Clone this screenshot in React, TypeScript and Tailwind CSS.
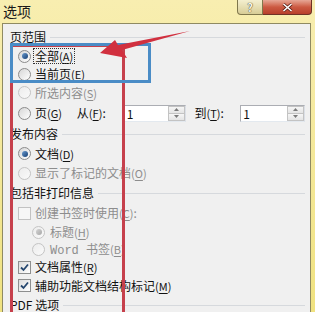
import React from 'react';

const cjk = { fontFamily: '"Noto Sans CJK SC", "Noto Sans", sans-serif' };

const Key: React.FC<{ k: string }> = ({ k }) => (
  <span className="text-[11px]">
    (<span className="underline underline-offset-2">{k}</span>)
  </span>
);

const Radio: React.FC<{ on?: boolean; off?: boolean }> = ({ on, off }) => (
  <span
    className={
      off
        ? 'w-[13px] h-[13px] shrink-0 rounded-full border border-[#c4c4c4] bg-gradient-to-br from-[#ececec] to-[#fafafa] flex items-center justify-center'
        : 'w-[13px] h-[13px] shrink-0 rounded-full border border-[#8b8b8b] bg-gradient-to-br from-[#d6d6d6] to-[#ffffff] flex items-center justify-center'
    }
  >
    {on && !off && <span className="w-[6px] h-[6px] rounded-full bg-gradient-to-br from-[#6a9bcf] to-[#163f73]" />}
    {on && off && <span className="w-[6px] h-[6px] rounded-full bg-gradient-to-br from-[#d4d4d4] to-[#a6a6a6]" />}
  </span>
);

const Check: React.FC<{ on?: boolean; off?: boolean }> = ({ on, off }) => (
  <span
    className={
      off
        ? 'w-[13px] h-[13px] shrink-0 border border-[#c2c2c2] bg-[#f6f6f6] flex items-center justify-center'
        : 'w-[13px] h-[13px] shrink-0 border border-[#8e8f8f] bg-gradient-to-br from-[#dcdcdc] to-[#ffffff] flex items-center justify-center'
    }
  >
    {on && (
      <svg width="9" height="9" viewBox="0 0 9 9">
        <path d="M1 4.5 L3.5 7 L8 1.5" fill="none" stroke="#24466e" strokeWidth="1.8" />
      </svg>
    )}
  </span>
);

const Header: React.FC<{ cls: string; children: React.ReactNode }> = ({ cls, children }) => (
  <div className={`flex items-center ${cls}`}>
    <span className="text-[12px] text-[#111]">{children}</span>
    <div className="flex-1 h-px bg-[#d6d9dd] ml-[4px]" />
  </div>
);

const Spin: React.FC<{ w: string }> = ({ w }) => (
  <div className={`${w} h-[17px] flex bg-white border border-[#abadb3] border-r-[#dbdfe6] border-b-[#e3e9ef]`}>
    <span className="flex-1 pl-[2px] text-[12px] leading-[15px] text-[#111]">1</span>
    <div className="w-[17px] flex flex-col">
      <div className="flex-1 flex items-center justify-center bg-gradient-to-b from-[#f6f6f6] to-[#e4e4e4] border border-[#c3c3c3]">
        <svg width="5" height="3" viewBox="0 0 5 3">
          <path d="M0 3 L2.5 0 L5 3 Z" fill="#7a7a7a" />
        </svg>
      </div>
      <div className="flex-1 flex items-center justify-center bg-gradient-to-b from-[#f6f6f6] to-[#e4e4e4] border border-t-0 border-[#c3c3c3]">
        <svg width="5" height="3" viewBox="0 0 5 3">
          <path d="M0 0 L2.5 3 L5 0 Z" fill="#7a7a7a" />
        </svg>
      </div>
    </div>
  </div>
);

export default function App() {
  return (
    <div
      className="w-[315px] h-[312px] overflow-hidden relative flex flex-col bg-gradient-to-b from-[#f8eeb0] to-[#f0e280]"
      style={cjk}
    >
      <div className="h-[23px] shrink-0 flex justify-between">
        <span className="pl-[3px] pt-[2px] text-[14px] leading-[18px] text-[#1a1a1a]">选项</span>
        <div className="flex self-start mr-[3px]">
          <div className="w-[26px] h-[15px] rounded-bl-[4px] border border-t-0 border-[#7f774c] bg-gradient-to-b from-[#f4efcf] to-[#d8cd96] flex items-center justify-center text-[11px] font-bold leading-none text-[#f8f6ea] [text-shadow:0_0_1px_#4a4020,0_0_1px_#4a4020]">
            ?
          </div>
          <div className="w-[49px] h-[15px] rounded-br-[4px] border border-t-0 border-l-0 border-[#6e3226] bg-gradient-to-b from-[#e6a796] via-[#cc5a42] to-[#b83f2b] flex items-center justify-center">
            <svg width="11" height="9" viewBox="0 0 11 9">
              <path d="M1.5 1 L9.5 8 M9.5 1 L1.5 8" stroke="#5a2018" strokeWidth="3" />
              <path d="M1.5 1 L9.5 8 M9.5 1 L1.5 8" stroke="#ffffff" strokeWidth="1.6" />
            </svg>
          </div>
        </div>
      </div>

      <div className="flex-1 ml-[2px] mr-[4px] border border-b-0 border-[#8f8a62] bg-[#f0f0f0] pt-[3px] pl-[7px] pr-[5px] text-[12px] text-[#111]">
        <Header cls="h-[20px]">页范围</Header>
        <div className="h-[18px] flex items-center pl-[8px] gap-[4px]">
          <Radio on />
          <span className="outline outline-1 outline-dotted outline-[#333] leading-[14px] px-[1px] -ml-[1px]">
            全部<Key k="A" />
          </span>
        </div>
        <div className="h-[18px] flex items-center pl-[8px] gap-[4px]">
          <Radio />
          <span>
            当前页<Key k="E" />
          </span>
        </div>
        <div className="h-[19px] flex items-center pl-[8px] gap-[4px] text-[#8d8d8d]">
          <Radio off />
          <span>
            所选内容<Key k="S" />
          </span>
        </div>
        <div className="h-[22px] flex items-center pl-[8px]">
          <Radio />
          <span className="w-[42px] ml-[4px]">
            页<Key k="G" />
          </span>
          <span className="w-[47px]">
            从<Key k="F" />:
          </span>
          <Spin w="w-[63px]" />
          <span className="w-[46px] ml-[8px]">
            到<Key k="T" />:
          </span>
          <Spin w="w-[65px]" />
        </div>

        <Header cls="h-[20px]">发布内容</Header>
        <div className="h-[19px] flex items-center pl-[8px] gap-[4px]">
          <Radio on />
          <span>
            文档<Key k="D" />
          </span>
        </div>
        <div className="h-[20px] flex items-center pl-[8px] gap-[4px] text-[#8d8d8d]">
          <Radio off />
          <span>
            显示了标记的文档<Key k="O" />
          </span>
        </div>

        <Header cls="h-[20px]">包括非打印信息</Header>
        <div className="h-[20px] flex items-center pl-[8px] gap-[4px] text-[#8d8d8d]">
          <Check off />
          <span>
            创建书签时使用<Key k="C" />:
          </span>
        </div>
        <div className="h-[18px] flex items-center pl-[22px] gap-[5px] text-[#8d8d8d]">
          <Radio on off />
          <span>
            标题<Key k="H" />
          </span>
        </div>
        <div className="h-[17px] flex items-center pl-[22px] gap-[5px] text-[#8d8d8d]">
          <Radio off />
          <span>
            <span style={{ fontFamily: '"Liberation Mono", monospace' }}>Word </span>书签<Key k="B" />
          </span>
        </div>
        <div className="h-[18px] flex items-center pl-[8px] gap-[4px]">
          <Check on />
          <span>
            文档属性<Key k="R" />
          </span>
        </div>
        <div className="h-[19px] flex items-center pl-[8px] gap-[4px]">
          <Check on />
          <span>
            辅助功能文档结构标记<Key k="M" />
          </span>
        </div>
        <Header cls="h-[20px]">PDF 选项</Header>
      </div>

      <div className="absolute left-[10px] top-[44px] w-[115px] h-[300px] border-[3px] border-[#c6404c]" />
      <div className="absolute left-[10px] top-[43px] w-[141px] h-[40px] border-[3px] border-[#4a8cc6]" />
      <svg className="absolute left-0 top-0 pointer-events-none" width="315" height="312" viewBox="0 0 315 312">
        <polygon points="100,53 115,40 118,45 190,31 122,50 127,58" fill="#d1303f" />
      </svg>
    </div>
  );
}
